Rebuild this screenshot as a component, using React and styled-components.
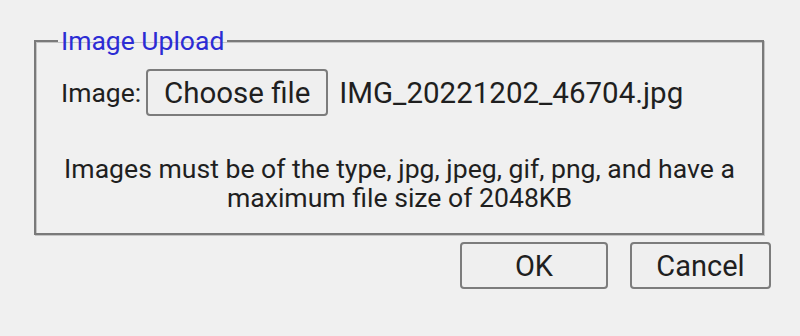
import React from 'react'
import styled, { createGlobalStyle } from 'styled-components'

const Global = createGlobalStyle`
  html, body {
    margin: 0;
    background: #f0f0f0;
    font-family: Roboto, "Noto Sans", sans-serif;
    color: #1f1f1f;
  }
`

const Page = styled.div`
  width: 800px;
  height: 336px;
  padding: 26px 0 0 34px;
  box-sizing: border-box;
`

const Fieldset = styled.fieldset`
  width: 730px;
  height: 209px;
  box-sizing: border-box;
  margin: 0;
  padding: 0 24px 0 25px;
  border: 2px solid #7a7a7a;
  box-shadow: inset 1px 1px 0 #c4c4c4, 1px 1px 0 #c4c4c4;
`

const Legend = styled.legend`
  color: #2c2cd4;
  font-size: 26.5px;
  padding: 0 3px;
  margin-left: -3px;
  line-height: 30px;
`

const Row = styled.div`
  display: flex;
  align-items: center;
  font-size: 26.5px;
  margin-top: 13px;
  height: 47px;
`

const Label = styled.span`
  margin-right: 5px;
`

const Button = styled.button`
  font-family: inherit;
  font-size: ${p => p.fs || 29}px;
  color: #1f1f1f;
  background: #efefef;
  border: 2px solid #7c7c7c;
  border-radius: 4px;
  height: 47px;
  width: ${p => p.w}px;
  padding: 0;
`

const FileName = styled.span`
  margin-left: 11px;
  font-size: 29.5px;
`

const Help = styled.p`
  margin: 38px 0 0;
  text-align: center;
  font-size: 26.6px;
  line-height: 29px;
`

const Actions = styled.div`
  display: flex;
  justify-content: flex-end;
  gap: 22px;
  width: 737px;
  margin-top: 7px;
`

export default function App() {
  return (
    <Page>
      <Global />
      <Fieldset>
        <Legend>Image Upload</Legend>
        <Row>
          <Label>Image:</Label>
          <Button w={182} fs={29.5}>Choose file</Button>
          <FileName>IMG_20221202_46704.jpg</FileName>
        </Row>
        <Help>
          Images must be of the type, jpg, jpeg, gif, png, and have a
          <br />
          maximum file size of 2048KB
        </Help>
      </Fieldset>
      <Actions>
        <Button w={148}>OK</Button>
        <Button w={141}>Cancel</Button>
      </Actions>
    </Page>
  )
}
